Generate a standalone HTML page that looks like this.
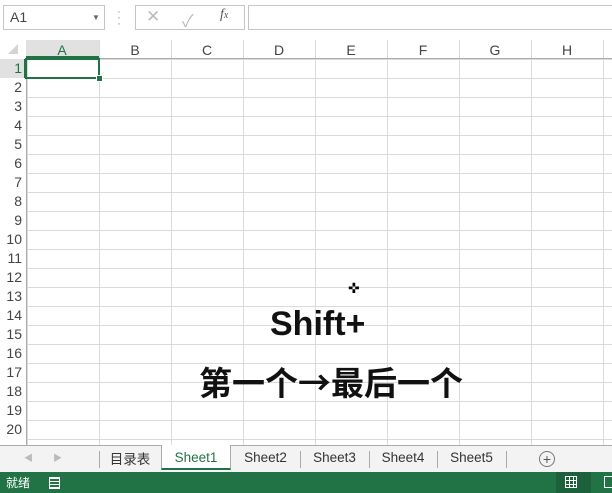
<!DOCTYPE html>
<html><head><meta charset="utf-8"><style>
body{margin:0;width:612px;height:493px;overflow:hidden;background:#fff;position:relative;font-family:"Liberation Sans","Noto Sans CJK SC",sans-serif}
.a{position:absolute}
.ch{position:absolute;top:40px;height:18px;width:72px;text-align:center;font-size:14px;color:#444;line-height:20px}
.rh{position:absolute;left:0;width:22px;text-align:right;font-size:14px;color:#444;height:19px;line-height:19px}
.tab{position:absolute;top:448px;height:22px;font-size:13.5px;color:#333;line-height:20px;text-align:center}
.sep{position:absolute;top:451px;width:1px;height:17px;background:#aaa}
.hs{position:absolute;top:40px;width:1px;height:18px;background:#dadada}
</style></head><body>
<div class="a" style="left:3px;top:5px;border:1px solid #c6c6c6;font-size:14px;color:#444;line-height:23px;padding-left:6px;box-sizing:border-box;width:102px;height:25px">A1<span style="position:absolute;left:88px;top:0;font-size:8px;color:#666">▼</span></div>
<div class="a" style="left:117px;top:8px;font-size:12px;color:#999;line-height:6px">·<br>·<br>·</div>
<div class="a" style="left:135px;top:5px;width:110px;height:25px;border:1px solid #c6c6c6;box-sizing:border-box"></div>
<div class="a" style="left:146px;top:7px;font-size:17px;color:#bbb">✕</div>
<div class="a" style="left:182px;top:7px;font-size:17px;color:#bbb">✓</div>
<div class="a" style="left:220px;top:7px;font-size:14px;color:#555;font-style:italic;font-family:'Liberation Serif',serif">f<span style="font-size:10px">x</span></div>
<div class="a" style="left:248px;top:5px;width:370px;height:25px;border:1px solid #c6c6c6;box-sizing:border-box"></div>
<div class="a" style="left:26px;top:58px;width:586px;height:387px;background-image:linear-gradient(to right,#dadada 1px,transparent 1px),linear-gradient(to bottom,#dadada 1px,transparent 1px);background-size:72px 19px;background-position:1px 1px"></div>
<div class="a" style="left:0;top:40px;width:612px;height:18px;background:#fff;border-bottom:1px solid #ababab"></div>
<div class="a" style="left:26px;top:40px;width:73px;height:18px;background:#e1e1e1;border-bottom:2px solid #217346;box-sizing:border-box"></div>
<div class="a" style="left:0;top:58px;width:26px;height:387px;border-right:1px solid #ababab;background:#fff"></div>
<div class="a" style="left:0;top:59px;width:26px;height:19px;background:#e1e1e1;border-right:2px solid #217346;box-sizing:border-box"></div>
<div class="a" style="left:8px;top:44px;width:0;height:0;border-left:10px solid transparent;border-bottom:10px solid #d4d4d4"></div>
<div class="ch" style="left:26px;color:#217346">A</div><div class="ch" style="left:99px">B</div><div class="ch" style="left:171px">C</div><div class="ch" style="left:243px">D</div><div class="ch" style="left:315px">E</div><div class="ch" style="left:387px">F</div><div class="ch" style="left:459px">G</div><div class="ch" style="left:531px">H</div>
<div class="hs" style="left:99px"></div><div class="hs" style="left:171px"></div><div class="hs" style="left:243px"></div><div class="hs" style="left:315px"></div><div class="hs" style="left:387px"></div><div class="hs" style="left:459px"></div><div class="hs" style="left:531px"></div><div class="hs" style="left:603px"></div>
<div class="rh" style="top:59px;color:#217346">1</div><div class="rh" style="top:78px">2</div><div class="rh" style="top:97px">3</div><div class="rh" style="top:116px">4</div><div class="rh" style="top:135px">5</div><div class="rh" style="top:154px">6</div><div class="rh" style="top:173px">7</div><div class="rh" style="top:192px">8</div><div class="rh" style="top:211px">9</div><div class="rh" style="top:230px">10</div><div class="rh" style="top:249px">11</div><div class="rh" style="top:268px">12</div><div class="rh" style="top:287px">13</div><div class="rh" style="top:306px">14</div><div class="rh" style="top:325px">15</div><div class="rh" style="top:344px">16</div><div class="rh" style="top:363px">17</div><div class="rh" style="top:382px">18</div><div class="rh" style="top:401px">19</div><div class="rh" style="top:420px">20</div>
<div class="a" style="left:25px;top:58px;width:75px;height:21px;border:2px solid #217346;box-sizing:border-box"></div>
<div class="a" style="left:96px;top:75px;width:5px;height:5px;background:#217346;border:1px solid #fff"></div>
<div class="a" style="left:348px;top:280px;font-size:14px;color:#000">✜</div>
<div class="a" style="left:270px;top:304px;font-size:34px;font-weight:bold;color:#111;line-height:40px">Shift+</div>
<div class="a" style="left:199px;top:360px;font-size:33px;font-weight:bold;color:#111;line-height:42px;font-family:'Noto Sans CJK SC',sans-serif;white-space:nowrap">第一个→最后一个</div>
<div class="a" style="left:0;top:445px;width:612px;height:27px;background:#f3f3f3;border-top:1px solid #ababab;box-sizing:border-box"></div>
<div class="a" style="left:24px;top:451px;font-size:9px;color:#bbb">◀</div>
<div class="a" style="left:53px;top:451px;font-size:9px;color:#bbb">▶</div>
<div class="sep" style="left:99px"></div>
<div class="tab" style="left:100px;width:60px;font-family:'Noto Sans CJK SC',sans-serif">目录表</div>
<div class="a" style="left:161px;top:445px;width:70px;height:25px;background:#fff;border-left:1px solid #ababab;border-right:1px solid #ababab;border-bottom:2px solid #217346;box-sizing:border-box"></div>
<div class="tab" style="left:161px;width:70px;color:#217346">Sheet1</div>
<div class="tab" style="left:231px;width:69px">Sheet2</div>
<div class="sep" style="left:300px"></div>
<div class="tab" style="left:300px;width:69px">Sheet3</div>
<div class="sep" style="left:369px"></div>
<div class="tab" style="left:369px;width:68px">Sheet4</div>
<div class="sep" style="left:437px"></div>
<div class="tab" style="left:437px;width:69px">Sheet5</div>
<div class="sep" style="left:506px"></div>
<div class="a" style="left:539px;top:451px;width:14px;height:14px;border:1px solid #777;border-radius:50%;font-size:14px;line-height:14px;text-align:center;color:#555">+</div>
<div class="a" style="left:0;top:472px;width:612px;height:21px;background:#217346"></div>
<div class="a" style="left:6px;top:474px;font-size:12px;color:#fff;font-family:'Noto Sans CJK SC',sans-serif">就绪</div>
<div class="a" style="left:49px;top:477px;width:11px;height:12px;border:1px solid #fff;box-sizing:border-box;background:repeating-linear-gradient(#fff 0 1px,transparent 1px 3px)"></div>
<div class="a" style="left:556px;top:472px;width:35px;height:21px;background:rgba(0,0,0,0.15)"></div>
<div class="a" style="left:565px;top:476px;width:12px;height:12px;border:1px solid #fff;box-sizing:border-box;background:linear-gradient(to right,transparent 3px,#fff 3px 4px,transparent 4px 7px,#fff 7px 8px,transparent 8px),linear-gradient(transparent 3px,#fff 3px 4px,transparent 4px 7px,#fff 7px 8px,transparent 8px)"></div>
<div class="a" style="left:604px;top:476px;width:10px;height:12px;border:1px solid #fff;box-sizing:border-box"></div>
</body></html>
